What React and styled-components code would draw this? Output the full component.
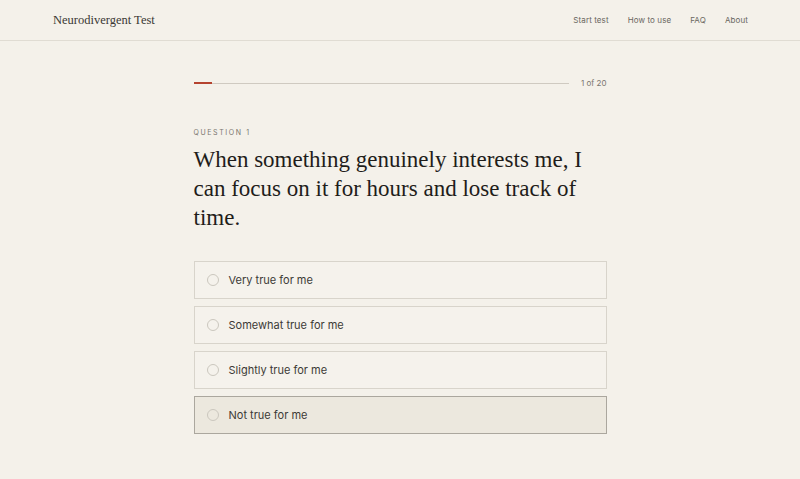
import React, { useState } from "react";
import styled, { createGlobalStyle } from "styled-components";

const GlobalStyle = createGlobalStyle`
  html, body {
    margin: 0;
    padding: 0;
    background: #f4f1ea;
  }
  body {
    font-family: "Inter", "Liberation Sans", sans-serif;
    color: #2a2825;
  }
`;

const Header = styled.header`
  height: 40px;
  border-bottom: 1px solid #e0dcd3;
  display: flex;
  align-items: center;
  justify-content: space-between;
  padding: 0 52px 0 53px;
`;

const Brand = styled.div`
  font-family: "Liberation Serif", serif;
  font-size: 12.5px;
  color: #3a3834;
`;

const Nav = styled.nav`
  display: flex;
  gap: 19px;
`;

const NavLink = styled.a`
  font-size: 8px;
  letter-spacing: 0.1px;
  color: #6a675f;
  text-decoration: none;
`;

const Main = styled.main`
  width: 413px;
  margin: 0 auto;
  padding-top: 37px;
`;

const Progress = styled.div`
  display: flex;
  align-items: center;
  gap: 12px;
`;

const Track = styled.div`
  flex: 1;
  height: 1px;
  background: #cfcac1;
`;

const Fill = styled.div`
  height: 2px;
  margin-top: -0.5px;
  background: #b5432f;
`;

const Count = styled.span`
  font-size: 8px;
  color: #7a766f;
`;

const Label = styled.div`
  margin-top: 40px;
  font-size: 7px;
  letter-spacing: 1.6px;
  color: #7a766f;
`;

const Question = styled.h1`
  margin: 8px 0 0;
  font-family: "Liberation Serif", serif;
  font-weight: normal;
  font-size: 23px;
  line-height: 29px;
  color: #1f1d1a;
`;

const Options = styled.div`
  margin-top: 29px;
  display: flex;
  flex-direction: column;
  gap: 7px;
`;

const Option = styled.label`
  height: 38px;
  box-sizing: border-box;
  display: flex;
  align-items: center;
  gap: 10px;
  padding: 0 12px;
  border: 1px solid ${p => (p.$active ? "#aba79e" : "#d8d4cb")};
  background: ${p => (p.$active ? "#ece8de" : "#f5f2ec")};
  cursor: pointer;
`;

const Radio = styled.span`
  width: 12px;
  height: 12px;
  box-sizing: border-box;
  border-radius: 50%;
  border: 1px solid #cbc7be;
`;

const OptionText = styled.span`
  font-size: 11px;
  color: #3c3a36;
`;

const answers = [
  "Very true for me",
  "Somewhat true for me",
  "Slightly true for me",
  "Not true for me"
];

export default function App() {
  const [hovered] = useState(3);
  const step = 1;
  const total = 20;

  return (
    <>
      <GlobalStyle />
      <Header>
        <Brand>Neurodivergent Test</Brand>
        <Nav>
          <NavLink href="#">Start test</NavLink>
          <NavLink href="#">How to use</NavLink>
          <NavLink href="#">FAQ</NavLink>
          <NavLink href="#">About</NavLink>
        </Nav>
      </Header>
      <Main>
        <Progress>
          <Track>
            <Fill style={{ width: `${(step / total) * 100}%` }} />
          </Track>
          <Count>
            {step} of {total}
          </Count>
        </Progress>
        <Label>QUESTION {step}</Label>
        <Question>
          When something genuinely interests me, I can focus on it for hours
          and lose track of time.
        </Question>
        <Options>
          {answers.map((a, i) => (
            <Option key={a} $active={i === hovered}>
              <Radio />
              <OptionText>{a}</OptionText>
            </Option>
          ))}
        </Options>
      </Main>
    </>
  );
}
